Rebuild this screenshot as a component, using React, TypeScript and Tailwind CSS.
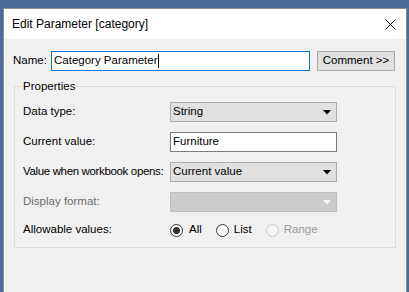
import React from 'react';

function Arrow({ disabled = false }: { disabled?: boolean }) {
  return (
    <svg width="8" height="5" viewBox="0 0 8 5" className="shrink-0">
      <path d="M0 0 H8 L4 4.5 Z" fill={disabled ? '#f4f4f4' : '#000'} />
    </svg>
  );
}

function Radio({ checked = false, disabled = false }: { checked?: boolean; disabled?: boolean }) {
  return (
    <svg width="13" height="13" viewBox="0 0 13 13" className="shrink-0">
      <circle cx="6.5" cy="6.5" r="6" fill={disabled ? '#f4f4f4' : '#fff'} stroke={disabled ? '#c8c8c8' : '#333'} strokeWidth="1" />
      {checked && <circle cx="6.5" cy="6.5" r="3.5" fill="#333" />}
    </svg>
  );
}

export default function App() {
  return (
    <div
      className="w-[409px] h-[292px] overflow-hidden bg-[#4a6d98] pt-[8px] pl-[3px]"
      style={{ fontFamily: '"Liberation Sans", Arial, sans-serif' }}
    >
      <div className="w-[404px] h-[284px] border border-b-0 border-[#8d8d8d] bg-[#f0f0f0] flex flex-col">
        {/* Title bar */}
        <div className="h-[30px] bg-white flex items-center justify-between pl-[8px] pr-[10px]">
          <span className="text-[12px] text-black">Edit Parameter [category]</span>
          <svg width="11" height="11" viewBox="0 0 11 11">
            <path d="M0.5 0.5 L10.5 10.5 M10.5 0.5 L0.5 10.5" stroke="#000" strokeWidth="1" />
          </svg>
        </div>

        {/* Body */}
        <div className="flex flex-col text-[11.5px] text-black">
          {/* Name row */}
          <div className="flex items-center mt-[12px] pl-[9px]">
            <span className="w-[38px]">Name:</span>
            <div className="w-[259px] h-[20px] border border-[#0078d7] bg-white flex items-center pl-[2px]">
              <span>Category Parameter</span>
              <span className="w-px h-[14px] bg-black" />
            </div>
            <button className="ml-[7px] w-[78px] h-[20px] border border-[#adadad] bg-[#e1e1e1] text-[11.5px]">
              Comment &gt;&gt;
            </button>
          </div>

          {/* Properties group */}
          <div className="relative ml-[10px] mt-[15px] w-[382px] border border-[#dcdcdc] pl-[8px] pt-[15px] pb-[9px] flex flex-col gap-[10px]">
            <span className="absolute -top-[9px] left-[7px] px-[1px] leading-[16px] bg-[#f0f0f0]">Properties</span>

            <div className="flex items-center">
              <span className="w-[147px] shrink-0 whitespace-nowrap">Data type:</span>
              <div className="w-[167px] h-[20px] border border-[#adadad] bg-[#e1e1e1] flex items-center justify-between pl-[2px] pr-[5px]">
                <span>String</span>
                <Arrow />
              </div>
            </div>

            <div className="flex items-center">
              <span className="w-[147px] shrink-0 whitespace-nowrap">Current value:</span>
              <div className="w-[167px] h-[20px] border border-[#7a7a7a] bg-white flex items-center pl-[2px]">
                <span>Furniture</span>
              </div>
            </div>

            <div className="flex items-center">
              <span className="w-[147px] shrink-0 whitespace-nowrap tracking-[-0.35px]">Value when workbook opens:</span>
              <div className="w-[167px] h-[20px] border border-[#adadad] bg-[#e1e1e1] flex items-center justify-between pl-[2px] pr-[5px]">
                <span>Current value</span>
                <Arrow />
              </div>
            </div>

            <div className="flex items-center">
              <span className="w-[147px] shrink-0 whitespace-nowrap text-[#6d6d6d]">Display format:</span>
              <div className="w-[167px] h-[20px] border border-[#bfbfbf] bg-[#cccccc] flex items-center justify-end pr-[5px]">
                <Arrow disabled />
              </div>
            </div>

            <div className="flex items-center h-[16px]">
              <span className="w-[147px] shrink-0 whitespace-nowrap">Allowable values:</span>
              <div className="flex items-center gap-[14px]">
                <div className="flex items-center gap-[6px]">
                  <Radio checked />
                  <span>All</span>
                </div>
                <div className="flex items-center gap-[5px]">
                  <Radio />
                  <span>List</span>
                </div>
                <div className="flex items-center gap-[5px]">
                  <Radio disabled />
                  <span className="text-[#9a9a9a]">Range</span>
                </div>
              </div>
            </div>
          </div>
        </div>
      </div>
    </div>
  );
}
